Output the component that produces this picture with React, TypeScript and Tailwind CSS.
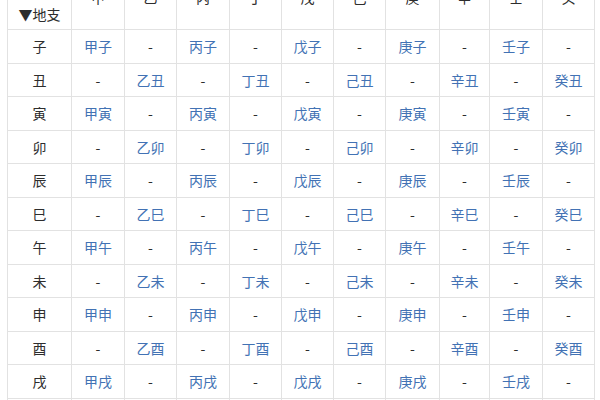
import React from "react";

const stems = ["甲", "乙", "丙", "丁", "戊", "己", "庚", "辛", "壬", "癸"];
const branches = ["子", "丑", "寅", "卯", "辰", "巳", "午", "未", "申", "酉", "戌", "亥"];
const widths = [64, 53, 52, 53, 52, 52, 52, 54, 50, 53, 52];

export default function App() {
  return (
    <div
      className="w-[600px] h-[400px] overflow-hidden bg-white relative"
      style={{ fontFamily: '"Noto Sans CJK SC", "Noto Sans", sans-serif' }}
    >
      <div className="-mt-[26px] ml-[7px]">
        <table className="table-fixed border-collapse text-[14px] text-[#2d2d2d] w-[587px] border border-[#e2e2e2]">
          <colgroup>
            {widths.map((w, i) => (
              <col key={i} style={{ width: w }} />
            ))}
          </colgroup>
          <thead>
            <tr className="h-[55px]">
              <th className="border border-[#e2e2e2] font-normal align-bottom pb-[5px] leading-[20px]">
                <div>▼地支</div>
              </th>
              {stems.map((s) => (
                <th key={s} className="border border-[#e2e2e2] font-normal align-top pt-[12px] leading-[20px]">
                  {s}
                </th>
              ))}
            </tr>
          </thead>
          <tbody>
            {branches.map((b, bi) => (
              <tr key={b} className="h-[33.5px]">
                <td className="border border-[#e2e2e2] text-center leading-[20px]">{b}</td>
                {stems.map((s, si) => (
                  <td key={s} className="border border-[#e2e2e2] text-center leading-[20px]">
                    {si % 2 === bi % 2 ? (
                      <span className="text-[#4272b4]">{s + b}</span>
                    ) : (
                      <span>-</span>
                    )}
                  </td>
                ))}
              </tr>
            ))}
          </tbody>
        </table>
      </div>
    </div>
  );
}
